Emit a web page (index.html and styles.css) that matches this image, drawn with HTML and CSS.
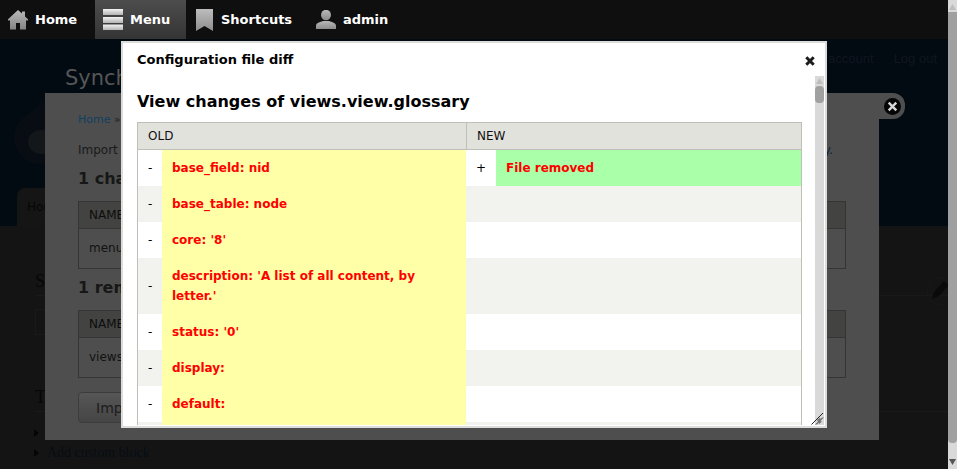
FILE: index.html
```html
<!DOCTYPE html>
<html lang="en">
<head>
<meta charset="utf-8">
<title>Synchronize configuration</title>
<link rel="stylesheet" href="styles.css">
</head>
<body>
<div class="window">
  <div class="viewport">
    <nav class="toolbar">
      <a class="tool">
        <svg class="ico" width="20" height="20" viewBox="0 0 20 20"><defs><linearGradient id="g1" x1="0" y1="0" x2="0" y2="1"><stop offset="0" stop-color="#b8b8b8"/><stop offset="1" stop-color="#858585"/></linearGradient></defs><path fill="url(#g1)" d="M10 0 L14 3.6 V1.5 H17 V6.4 L20 9.2 V10.5 H18 V19.5 H12 V13 H8 V19.5 H2 V10.5 H0 V9.2 Z"/></svg>
        <span>Home</span>
      </a>
      <a class="tool tool-active">
        <svg class="ico" width="20" height="21" viewBox="0 0 20 21"><defs><linearGradient id="g2" x1="0" y1="0" x2="0" y2="1"><stop offset="0" stop-color="#f2f2f2"/><stop offset="1" stop-color="#b4b4b4"/></linearGradient></defs><rect fill="url(#g2)" width="20" height="6"/><rect fill="url(#g2)" y="8" width="20" height="6"/><rect fill="url(#g2)" y="15.5" width="20" height="5.5"/></svg>
        <span>Menu</span>
      </a>
      <a class="tool">
        <svg class="ico" width="17" height="22" viewBox="0 0 17 22"><defs><linearGradient id="g3" x1="0" y1="0" x2="0" y2="1"><stop offset="0" stop-color="#bdbdbd"/><stop offset="1" stop-color="#8e8e8e"/></linearGradient></defs><path fill="url(#g3)" d="M0 0 H17 V22 L8.5 17 L0 22 Z"/></svg>
        <span>Shortcuts</span>
      </a>
      <a class="tool">
        <svg class="ico" width="20" height="19" viewBox="0 0 20 19"><defs><linearGradient id="g4" x1="0" y1="0" x2="0" y2="1"><stop offset="0" stop-color="#b8b8b8"/><stop offset="1" stop-color="#8c8c8c"/></linearGradient></defs><ellipse fill="url(#g4)" cx="10" cy="5" rx="5" ry="5.2"/><path fill="url(#g4)" d="M0 19 V15.5 C0 13 4 12 7 11 H13 C16 12 20 13 20 15.5 V19 Z"/></svg>
        <span>admin</span>
      </a>
    </nav>

    <header class="head">
      <div class="head-top">
        <div class="site-title">Synchronize</div>
        <div class="user-links"><span>My account</span><span>Log out</span></div>
      </div>
      <svg class="logo" width="50" height="66" viewBox="0 0 50 66"><path fill="#080d13" d="M27 0 C26 8 18 13 11 18 C4 24 0 31 0 39 C0 54 11 66 25 66 C39 66 50 54 50 39 C50 24 34 14 27 0 Z"/><ellipse fill="#14171a" cx="27" cy="44" rx="13" ry="12"/></svg>
      <div class="tab">Home</div>
    </header>

    <main class="main">
      <h2 class="main-h">Search</h2>
      <div class="search-box"></div>
      <h2 class="main-h main-h2">Tools</h2>
      <ul class="links">
        <li>&nbsp;</li>
        <li>Add custom block</li>
      </ul>
    </main>

    <svg class="pencil" width="30" height="30" viewBox="0 0 30 30"><circle cx="15" cy="15" r="14" fill="none" stroke="#181818"/><path fill="#0a0a0a" d="M6 23 L8 16 L18 5 L23 9 L13 20 Z"/></svg>

    <section class="panel">
      <p class="crumb"><span class="crumb-link">Home</span> » Administration</p>
      <p class="intro"><span>Import and export your configuration</span><span class="intro-end">y.</span></p>
      <h3 class="panel-h">1 changed</h3>
      <div class="mini-table">
        <div class="mini-head">NAME</div>
        <div class="mini-row">menu</div>
      </div>
      <h3 class="panel-h panel-h2">1 removed</h3>
      <div class="mini-table">
        <div class="mini-head">NAME</div>
        <div class="mini-row">views</div>
      </div>
      <div class="import-btn">Import all</div>
    </section>
    <div class="panel-tab">
      <svg width="17" height="17" viewBox="0 0 17 17"><circle cx="8.5" cy="8.5" r="8.5" fill="#050505"/><path d="M4.7 4.7 L12.3 12.3 M12.3 4.7 L4.7 12.3" stroke="#d8d8d8" stroke-width="2.4"/></svg>
    </div>

    <div class="modal">
      <div class="modal-title">
        <span>Configuration file diff</span>
        <svg class="modal-x" width="10" height="10" viewBox="0 0 10 10"><path d="M1.3 1.3 L8.7 8.7 M8.7 1.3 L1.3 8.7" stroke="#1c1c1c" stroke-width="3"/></svg>
      </div>
      <div class="modal-wrap">
        <div class="modal-body">
          <h2 class="diff-h">View changes of views.view.glossary</h2>
          <table class="diff">
            <colgroup><col class="c1"><col class="c2"><col class="c3"><col class="c4"></colgroup>
            <thead>
              <tr><th colspan="2">OLD</th><th colspan="2" class="th-new">NEW</th></tr>
            </thead>
            <tbody>
              <tr><td class="sign">-</td><td class="del">base_field: nid</td><td class="sign sign-new">+</td><td class="add">File removed</td></tr>
              <tr><td class="sign">-</td><td class="del">base_table: node</td><td></td><td></td></tr>
              <tr><td class="sign">-</td><td class="del">core: '8'</td><td></td><td></td></tr>
              <tr><td class="sign">-</td><td class="del">description: 'A list of all content, by letter.'</td><td></td><td></td></tr>
              <tr><td class="sign">-</td><td class="del">status: '0'</td><td></td><td></td></tr>
              <tr><td class="sign">-</td><td class="del">display:</td><td></td><td></td></tr>
              <tr><td class="sign">-</td><td class="del">default:</td><td></td><td></td></tr>
              <tr><td></td><td class="del"></td><td></td><td></td></tr>
            </tbody>
          </table>
        </div>
        <div class="modal-bar">
          <svg class="bar-arrow" width="9" height="6" viewBox="0 0 9 6"><path d="M4.5 0 L8 6 H1 Z" fill="#bdbdbd"/></svg>
          <div class="modal-thumb"></div>
        </div>
        <svg class="grip" width="13" height="13" viewBox="0 0 13 13"><path d="M0.5 12.5 L12 1 M5 12.5 L12 5.5" stroke="#222" stroke-width="1" fill="none"/><path d="M6 8 L9 5.5 L10.5 10 L8 12 Z" fill="#777"/></svg>
      </div>
    </div>
  </div>

  <div class="winbar">
    <svg class="win-up" width="9" height="8" viewBox="0 0 9 8"><path d="M4.5 1 L8 7 H1 Z" fill="#bdbdbd"/></svg>
    <div class="win-thumb"></div>
    <svg class="win-down" width="9" height="8" viewBox="0 0 9 8"><path d="M1 1 H8 L4.5 7 Z" fill="#555"/></svg>
  </div>
</div>
</body>
</html>
```

FILE: styles.css
```css
* { box-sizing: border-box; }
html, body { margin: 0; padding: 0; height: 100%; overflow: hidden; }
body { background: #141414; font-family: "DejaVu Sans", sans-serif; }

.window { display: flex; width: 957px; height: 469px; }
.viewport { position: relative; width: 948px; height: 469px; overflow: hidden; background: #141414; }

/* toolbar */
.toolbar { display: flex; height: 39px; background: #0f0f0f; padding-left: 8px; }
.tool { display: flex; align-items: center; height: 39px; color: #fff; font-size: 13px; font-weight: 700; }
.tool:nth-child(1) { width: 87px; gap: 7px; }
.tool-active { width: 91px; padding-left: 8px; gap: 7px; background: linear-gradient(#4d4d4d, #343434); }
.tool:nth-child(3) { width: 130px; padding-left: 10px; gap: 8px; }
.tool:nth-child(4) { gap: 7px; }
.ico { flex: none; }

/* header behind the dialog */
.head { height: 187px; background: #020a12; display: flex; flex-direction: column; }
.head-top { display: flex; height: 53px; padding-right: 11px; }
.site-title { margin: 27px 0 0 65px; color: #565656; font-size: 21px; line-height: 24px; }
.user-links { margin: 12px 0 0 auto; display: flex; gap: 20px; color: #10171e; font: 13px/16px "Liberation Sans", sans-serif; }
.logo { margin: 6px 0 0 14px; }
.tab { margin: auto 0 0 17px; width: 120px; height: 38px; padding: 11px 0 0 10px; background: #151515; border-radius: 8px 8px 0 0; color: #050505; font-size: 12px; line-height: 16px; }

/* page body behind the dialog */
.main { padding: 46px 0 0 35px; font-family: "Liberation Serif", serif; color: #060606; }
.main-h { margin: 0; height: 24px; font-size: 18px; font-weight: 400; line-height: 18px; border-bottom: 1px solid #191919; }
.search-box { width: 120px; height: 26px; margin-top: 13px; border: 1px solid #191919; }
.main-h2 { margin-top: 53px; }
.links { margin: 11px 0 0; padding: 0 0 0 12px; list-style: none; font-size: 14px; line-height: 20px; color: #060e15; }
.links li { position: relative; }
.links li::before { content: ""; position: absolute; left: -13px; top: 6px; border-left: 5px solid #050505; border-top: 4px solid transparent; border-bottom: 4px solid transparent; }
.pencil { position: absolute; left: 926px; top: 276px; }

/* dimmed settings panel */
.panel { position: absolute; left: 45px; top: 93px; width: 834px; height: 347px; padding: 19px 33px 0; background: #4e4e4e; color: #141414; font-size: 12px; line-height: 16px; }
.crumb { margin: 0; font-size: 11px; color: #1d1d1d; }
.crumb-link { color: #114060; }
.intro { display: flex; justify-content: space-between; margin: 14px 0 0; padding-right: 13px; font-size: 12px; color: #1a1a1a; }
.intro-end { color: #0c2537; }
.panel-h { margin: 11px 0 0; font-size: 16px; line-height: 20px; font-weight: 700; color: #171717; }
.panel-h2 { margin-top: 9px; }
.mini-table { margin-top: 12px; width: 768px; border: 1px solid #353535; }
.mini-head { height: 27px; padding: 5px 10px; background: #434341; border-bottom: 1px solid #353535; color: #0d0d0d; }
.mini-row { height: 39px; padding: 11px 10px; color: #111; }
.import-btn { width: 120px; height: 31px; margin-top: 14px; padding: 6px 17px; border: 1px solid #3c3c3c; border-radius: 4px; background: linear-gradient(#565656, #454545); color: #1c1c1c; font-size: 14px; line-height: 18px; }
.panel-tab { position: absolute; left: 879px; top: 93px; width: 26px; height: 26px; padding: 4.5px 0 0; background: #4e4e4e; border-radius: 0 12px 12px 0; display: flex; justify-content: flex-start; }
.panel-tab svg { margin-left: 4.5px; }

/* dialog */
.modal { position: absolute; left: 121px; top: 41px; width: 706px; height: 387px; background: #fff; border: 2px solid #dcdcda; display: flex; flex-direction: column; overflow: hidden; }
.modal-title { display: flex; align-items: center; justify-content: space-between; height: 33px; flex: none; padding: 0 10px 0 14px; color: #000; font-size: 13px; font-weight: 700; }
.modal-x { margin-top: 3px; }
.modal-wrap { position: relative; flex: 1; display: flex; min-height: 0; margin-bottom: 1px; }
.modal-body { flex: 1; min-width: 0; padding: 0 13px 0 14px; overflow: hidden; }
.diff-h { margin: 16px 0 0; font-size: 16px; line-height: 20px; font-weight: 700; color: #000; }
.diff { margin-top: 10px; width: 665px; table-layout: fixed; border-collapse: separate; border-spacing: 0; border: 1px solid #bebfb9; border-bottom: 0; font-size: 12px; line-height: 20px; }
.c1 { width: 24px; }
.c2 { width: 304px; }
.c3 { width: 30px; }
.diff th { height: 27px; padding: 0 10px; background: #e1e2dc; border-bottom: 1px solid #bebfb9; color: #111; font-size: 12px; font-weight: 400; text-align: left; }
.diff th.th-new { border-left: 1px solid #bebfb9; }
.diff td { padding: 8px 0; vertical-align: middle; }
.diff tbody tr:nth-child(even) { background: #f2f3ee; }
.diff .sign { padding-left: 10px; color: #000; font-size: 12px; }
.diff .sign-new { padding-left: 10px; }
.diff .del, .diff .add { padding: 8px 10px; color: #f00; font-weight: 700; }
.diff .del { background: #ffffa8; }
.diff .add { background: #aaffa9; }
.modal-bar { flex: none; width: 9px; margin-right: 1px; background: #d9d9d9; display: flex; flex-direction: column; align-items: center; }
.bar-arrow { margin-top: 2px; }
.modal-thumb { width: 9px; height: 17px; margin-top: 2px; background: #a0a0a0; border-radius: 4px; }
.grip { position: absolute; right: 1px; bottom: 0; }

/* window scrollbar */
.winbar { width: 9px; height: 469px; background: #d9d9d9; display: flex; flex-direction: column; }
.win-up { flex: none; margin-top: 3px; }
.win-thumb { flex: none; width: 9px; height: 431px; margin-top: 1px; background: #a0a0a0; border-radius: 0 0 4px 4px; }
.win-down { flex: none; margin-top: 15px; }
```
